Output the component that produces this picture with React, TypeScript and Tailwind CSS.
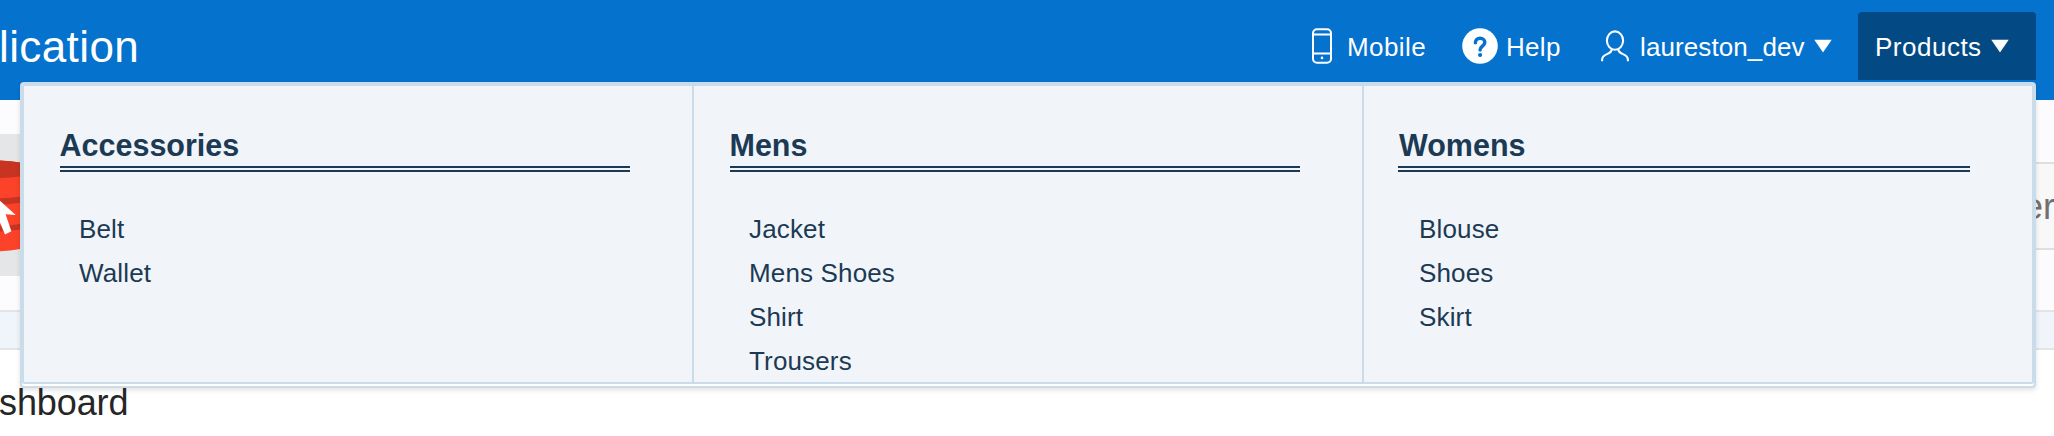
const font = "font-['Liberation_Sans',Arial,sans-serif]";

const menu = [
  { title: "Accessories", items: ["Belt", "Wallet"] },
  { title: "Mens", items: ["Jacket", "Mens Shoes", "Shirt", "Trousers"] },
  { title: "Womens", items: ["Blouse", "Shoes", "Skirt"] },
];

function MobileIcon() {
  return (
    <svg width="20" height="36" viewBox="0 0 20 36" fill="none" stroke="white" strokeWidth="2">
      <rect x="1" y="1.2" width="18" height="33.6" rx="4" />
      <path d="M1 6.4H19M1 25.4H19" />
      <circle cx="10" cy="29.9" r="1.3" fill="white" stroke="none" />
    </svg>
  );
}

function HelpIcon() {
  return (
    <svg width="36" height="36" viewBox="0 0 36 36">
      <circle cx="18" cy="18" r="17.8" fill="white" />
      <path d="M13.4 14.8C13.4 12.1 15.3 10.3 18.1 10.3C20.9 10.3 22.8 12.1 22.8 14.4C22.8 17.8 18.1 17.9 18.1 22" fill="none" stroke="#0572ce" strokeWidth="3.5" strokeLinecap="round" />
      <circle cx="18.1" cy="27" r="2.1" fill="#0572ce" />
    </svg>
  );
}

function UserIcon() {
  return (
    <svg width="28" height="36" viewBox="0 0 28 36" fill="none" stroke="white" strokeWidth="2.1">
      <ellipse cx="14" cy="12.6" rx="8.1" ry="9.2" />
      <path d="M1.1 33.2V31.8C1.1 28.8 3 27.3 6 26.1C9 24.9 10.6 24.1 10.8 21.1M26.9 33.2V31.8C26.9 28.8 25 27.3 22 26.1C19 24.9 17.4 24.1 17.2 21.1" />
    </svg>
  );
}

function Caret() {
  return (
    <svg width="18" height="14" viewBox="0 0 18 14" fill="white">
      <path d="M0.3 0.8H17.7L9 13.6Z" />
    </svg>
  );
}

function Hat() {
  return (
    <svg width="20" height="142" viewBox="0 134 20 142">
      <path d="M0 160.5Q11 161 20 162.5V249Q10 251 0 251.2Z" fill="#fc4229" />
      <path d="M0 160.5Q11 161 20 162.5V176.6Q10 178 0 178ZM0 198.3Q11 198 20 196.8V202.8Q10 204.3 0 204.5ZM0 226Q11 225.5 20 224V229.4Q10 231 0 231.5Z" fill="#c73422" />
      <path d="M0 200.8L15.7 215L5.6 214.3L11.4 231.3L5 234.4L0 222.5Z" fill="white" />
    </svg>
  );
}

export default function App() {
  return (
    <div className={`relative h-[436px] w-full overflow-hidden bg-white ${font}`}>
      <header className="flex h-[100px] items-start justify-between bg-[#0572ce] pr-[18px] text-white">
        <h1 className="-ml-[1px] pt-[21px] text-[44px] leading-[52px] tracking-[0.4px]">lication</h1>
        <nav className="flex pt-3 text-[26px] leading-[30px]">
          <a className="flex h-[68px] items-center gap-[15px]">
            <MobileIcon />
            <span className="w-[81px] whitespace-nowrap pt-[2px] tracking-[0.4px]">Mobile</span>
          </a>
          <a className="ml-[34px] flex h-[68px] items-center gap-2">
            <HelpIcon />
            <span className="w-[55px] whitespace-nowrap pt-[2px] tracking-[0.3px]">Help</span>
          </a>
          <a className="ml-[40px] flex h-[68px] items-center">
            <UserIcon />
            <span className="ml-[11px] w-[174px] whitespace-nowrap pt-[2px] tracking-[0.1px]">laureston_dev</span>
            <Caret />
          </a>
          <a className="ml-[26px] flex h-[68px] w-[178px] items-center rounded-t bg-[#034a85] pl-[17px]">
            <span className="w-[116px] whitespace-nowrap pt-[2px] tracking-[0.5px]">Products</span>
            <Caret />
          </a>
        </nav>
      </header>

      <section className="flex h-[210px] justify-between bg-[#fcfcfe]">
        <div className="mt-[34px] h-[142px] w-5 bg-[#e4e6e7]">
          <Hat />
        </div>
        <div className="mt-[62px] h-[88px] w-[31px] border-y-2 border-[#dfdfdf] bg-[#f8f8f8] pt-[22px] text-[36px] leading-[42px] text-[#707070]">
          er
        </div>
      </section>
      <div className="h-10 border-y-2 border-[#e4e4e5] bg-[#eff5fa]" />
      <h2 className="-ml-[1px] pt-[32px] text-[36px] leading-[42px] tracking-[-0.1px] text-[#262626]">shboard</h2>

      {/* mega menu */}
      <div className="absolute left-5 top-[82px] h-[306px] w-[2016px] rounded-[4px] border-2 border-[#cadcea] bg-white pb-[2px] shadow-[0_2px_5px_rgba(0,0,0,0.12)]">
        <div className="grid h-full grid-cols-[670px_670px_668px] rounded-[2px] border-2 border-[#cadcea] bg-[#f1f5fa] text-[#1c3a53]">
          {menu.map((group, i) => (
            <div
              key={group.title}
              className={`pr-[62px] pt-[41px] ${i < 2 ? "border-r-2 border-[#cadcea] pl-9" : "pl-[34px]"}`}
            >
              <h3 className={`border-b-[6px] border-double border-[#1c3a53] pb-[3px] text-[30.5px] font-bold leading-[36px] ${i < 2 ? "-indent-[0.5px]" : "indent-[1px]"}`}>
                {group.title}
              </h3>
              <ul className={`pt-[35px] text-[26px] leading-[44px] tracking-[0.15px] ${i < 2 ? "pl-[19px]" : "pl-[21px]"}`}>
                {group.items.map((item) => (
                  <li key={item}>{item}</li>
                ))}
              </ul>
            </div>
          ))}
        </div>
      </div>
    </div>
  );
}
